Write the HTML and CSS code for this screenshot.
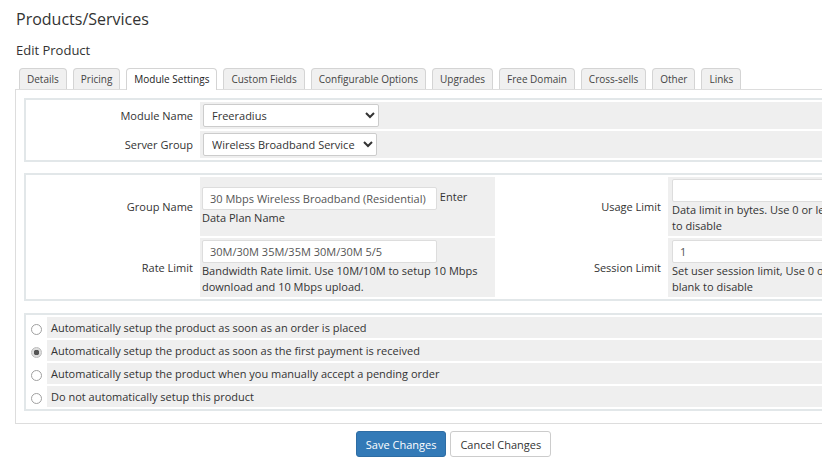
FILE: index.html
```html
<!DOCTYPE html>
<html>
<head>
<meta charset="utf-8">
<link rel="stylesheet" href="styles.css">
</head>
<body>
<div class="viewport">
<div class="page">
  <h1 class="title">Products/Services</h1>
  <h2 class="subtitle">Edit Product</h2>
  <ul class="tabs">
    <li class="tab">Details</li>
    <li class="tab">Pricing</li>
    <li class="tab active">Module Settings</li>
    <li class="tab">Custom Fields</li>
    <li class="tab">Configurable Options</li>
    <li class="tab">Upgrades</li>
    <li class="tab">Free Domain</li>
    <li class="tab">Cross-sells</li>
    <li class="tab">Other</li>
    <li class="tab">Links</li>
  </ul>
  <div class="panel">
    <table class="form form-two">
      <colgroup><col class="c-label"><col></colgroup>
      <tr>
        <td class="fieldlabel">Module Name</td>
        <td class="fieldarea"><select class="sel sel-module"><option>Freeradius</option></select></td>
      </tr>
      <tr>
        <td class="fieldlabel">Server Group</td>
        <td class="fieldarea"><select class="sel sel-group"><option>Wireless Broadband Service</option></select></td>
      </tr>
    </table>

    <table class="form form-four">
      <colgroup><col class="c-label"><col class="c-field1"><col class="c-label2"><col></colgroup>
      <tr>
        <td class="fieldlabel">Group Name</td>
        <td class="fieldarea"><input class="txt txt-wide" type="text" value="30 Mbps Wireless Broadband (Residential)"> Enter<br>Data Plan Name</td>
        <td class="fieldlabel">Usage Limit</td>
        <td class="fieldarea"><input class="txt txt-full" type="text" value=""><br><span class="help">Data limit in bytes. Use 0 or leave blank<br>to disable</span></td>
      </tr>
      <tr>
        <td class="fieldlabel">Rate Limit</td>
        <td class="fieldarea"><input class="txt txt-wide" type="text" value="30M/30M 35M/35M 30M/30M 5/5"><br><span class="help">Bandwidth Rate limit. Use 10M/10M to setup 10 Mbps<br>download and 10 Mbps upload.</span></td>
        <td class="fieldlabel">Session Limit</td>
        <td class="fieldarea"><input class="txt txt-full" type="text" value="1"><br><span class="help">Set user session limit, Use 0 or leave<br>blank to disable</span></td>
      </tr>
    </table>

    <table class="form form-radio">
      <colgroup><col class="c-radio"><col></colgroup>
      <tr>
        <td class="radiocell"><input class="radio" type="radio" name="setup"></td>
        <td class="fieldarea radiotext">Automatically setup the product as soon as an order is placed</td>
      </tr>
      <tr>
        <td class="radiocell"><input class="radio" type="radio" name="setup" checked></td>
        <td class="fieldarea radiotext">Automatically setup the product as soon as the first payment is received</td>
      </tr>
      <tr>
        <td class="radiocell"><input class="radio" type="radio" name="setup"></td>
        <td class="fieldarea radiotext">Automatically setup the product when you manually accept a pending order</td>
      </tr>
      <tr>
        <td class="radiocell"><input class="radio" type="radio" name="setup"></td>
        <td class="fieldarea radiotext">Do not automatically setup this product</td>
      </tr>
    </table>
  </div>
  <div class="actions">
    <button class="btn btn-primary">Save Changes</button>
    <button class="btn btn-default">Cancel Changes</button>
  </div>
</div>
</div>
</body>
</html>
```

FILE: styles.css
```css
html, body {
  margin: 0;
  padding: 0;
  background: #fff;
}
body {
  font-family: "Open Sans", "Noto Sans", sans-serif;
  font-size: 11px;
  color: #333;
}
.viewport {
  width: 822px;
  height: 466px;
  overflow: hidden;
}
.page {
  width: 877px;
  padding: 9px 0 0 15px;
}
.title {
  margin: 0 0 0 1px;
  font-size: 16px;
  font-weight: 400;
  line-height: 20px;
  color: #333;
}
.subtitle {
  margin: 12px 0 0 1px;
  font-size: 13px;
  font-weight: 400;
  line-height: 18px;
  color: #333;
}
.tabs {
  list-style: none;
  margin: 9px 0 0 4px;
  padding: 0;
  display: flex;
  gap: 6px;
  position: relative;
  z-index: 1;
}
.tab {
  height: 20px;
  line-height: 20px;
  padding: 0 7px;
  font-size: 10px;
  color: #444;
  background: #f0f0f0;
  border: 1px solid #d4d4d4;
  border-bottom: none;
  border-radius: 4px 4px 0 0;
  white-space: nowrap;
}
.tab.active {
  background: #fff;
  color: #222;
  height: 21px;
  margin-bottom: -1px;
}
.panel {
  border: 1px solid #ddd;
  padding: 8px 8px 0;
}
.form {
  width: 100%;
  table-layout: fixed;
  border: 2px solid #e2e7e9;
  border-collapse: separate;
  border-spacing: 2px;
  background: #fff;
  margin-bottom: 12px;
}
.form-two {
  margin-bottom: 11px;
}
.c-label { width: 170px; }
.c-field1 { width: 295px; }
.c-label2 { width: 169px; }
.c-radio { width: 17px; }
.fieldlabel {
  text-align: right;
  padding: 0 5px 0 0;
  vertical-align: middle;
  white-space: nowrap;
  background: #fff;
}
.fieldarea {
  background: #efefef;
  padding: 2px 2px;
  vertical-align: middle;
  line-height: 15.5px;
  white-space: nowrap;
}
.form-four .fieldarea {
  padding: 2px 2px 2px 2px;
  line-height: 16px;
}
.form-four td:nth-child(4) {
  padding-left: 4px;
}
.sel {
  height: 23px;
  font-family: "Open Sans", "Noto Sans", sans-serif;
  font-size: 11px;
  color: #333;
  border: 1px solid #ccc;
  border-radius: 2px;
  background: #fff;
  padding: 0 4px;
  vertical-align: middle;
}
.sel-module { width: 176px; margin-left: 1px; }
.sel-group { width: 174px; margin-left: 1px; }
.txt {
  height: 23px;
  box-sizing: border-box;
  font-family: "Open Sans", "Noto Sans", sans-serif;
  font-size: 11px;
  color: #555;
  border: 1px solid #ddd;
  border-radius: 2px;
  background: #fff;
  padding: 0 7px;
  margin: 0;
  vertical-align: middle;
}
.txt-wide { width: 235px; }
.txt-full { width: 200px; }
.help {
  color: #333;
}
.radiocell {
  background: #fff;
  padding: 0;
  text-align: center;
  vertical-align: middle;
  height: 21px;
}
.radiotext {
  padding: 0 4px;
  height: 21px;
}
.radio {
  appearance: none;
  -webkit-appearance: none;
  width: 11px;
  height: 11px;
  margin: 0;
  border: 1px solid #a0a0a0;
  border-radius: 50%;
  background: #fff;
  vertical-align: middle;
  box-sizing: border-box;
}
.radio:checked {
  background: radial-gradient(circle, #555 0 2.6px, #ddd 3px 100%);
  border-color: #bbb;
}
.actions {
  display: flex;
  justify-content: center;
  gap: 4px;
  margin-top: 7px;
}
.btn {
  font-family: "Open Sans", "Noto Sans", sans-serif;
  font-size: 11px;
  height: 26px;
  padding: 0 9px;
  border-radius: 3px;
  border: 1px solid;
  cursor: pointer;
}
.btn-primary {
  background: #337ab7;
  border-color: #2e6da4;
  color: #fff;
}
.btn-default {
  background: #fff;
  border-color: #ccc;
  color: #333;
}
```
